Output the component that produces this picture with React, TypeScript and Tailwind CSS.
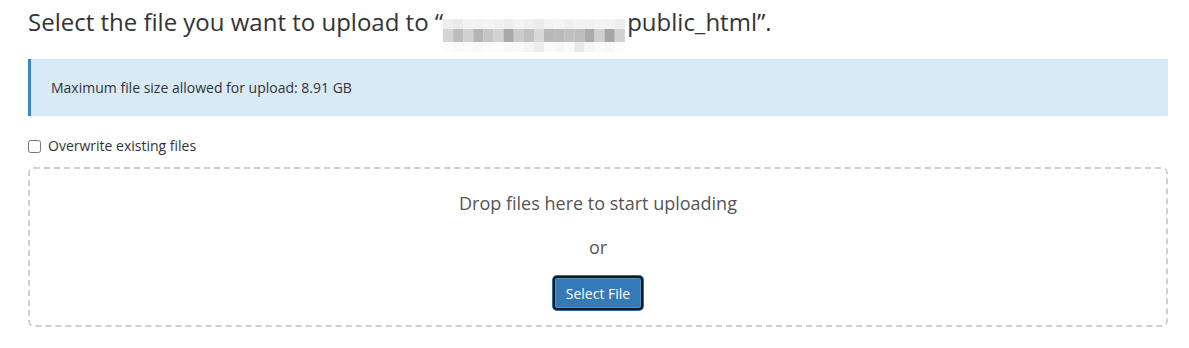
import React from 'react';

// pixelated censor over the folder path, as in the screenshot
const CENSOR_ROWS: string[][] = [
  ['#eeeeee', '#eaeaea', '#f3f3f3', '#f2f2f2', '#f4f4f4', '#f1f1f1', '#eeeeee', '#f3f3f3', '#f0f0f0', '#ebebeb', '#f2f2f2', '#f4f4f4', '#f0f0f0', '#f3f3f3', '#f1f1f1', '#f4f4f4', '#f2f2f2', '#eeeeee'],
  ['#d4d4d4', '#bdbdbd', '#d2d2d2', '#b5b5b5', '#c5c5c5', '#d3d3d3', '#a8a8a8', '#cbcbcb', '#c0c0c0', '#d8d8d8', '#b8b8b8', '#bababa', '#c0c0c0', '#bdbdbd', '#aaaaaa', '#d0d0d0', '#a6a6a6', '#d2d2d2'],
  ['#fcfcfc', '#fafafa', '#fbfbfb', '#f9f9f9', '#fbfbfb', '#fcfcfc', '#f8f8f8', '#fafafa', '#f5f5f5', '#ececec', '#fafafa', '#f7f7f7', '#fbfbfb', '#e8e8e8', '#f6f6f6', '#fafafa', '#f8f8f8', '#fcfcfc'],
];
const ROW_H = [10, 13, 10];

function Censor() {
  let y = 0;
  return (
    <svg width={184} height={33} className="inline-block align-[-11px] -my-[10px]" aria-hidden>
      {CENSOR_ROWS.map((row, r) => {
        const top = y;
        y += ROW_H[r];
        return row.map((c, i) => (
          <rect key={`${r}-${i}`} x={i * 10.1} y={top} width={10.2} height={ROW_H[r]} fill={c} />
        ));
      })}
    </svg>
  );
}

export default function App() {
  return (
    <div className="min-h-[348px] bg-white pl-[28px] pr-[21px] text-[#333] [font-family:'Open_Sans',sans-serif]">
      <h1 className="h-[37px] pt-[7px] text-[24px] leading-[30px] text-[#333] whitespace-nowrap">
        Select the file you want to upload to “<Censor />public_html”.
      </h1>

      <div className="mt-[22px] flex h-[57px] items-center border-l-[3px] border-[#3a87c3] bg-[#d9eaf7] pl-[20px] text-[14px] text-[#333]">
        Maximum file size allowed for upload: 8.91 GB
      </div>

      <label className="mt-[21px] flex items-center gap-[7px] text-[14px] leading-[18px] text-[#333]">
        <input type="checkbox" className="h-[13px] w-[13px] m-0" />
        Overwrite existing files
      </label>

      <div className="mt-[12px] flex h-[160px] flex-col items-center rounded-[6px] border-2 border-dashed border-[#cfcfcf] pt-[22px]">
        <p className="text-[18px] leading-[24px] text-[#555]">Drop files here to start uploading</p>
        <p className="mt-[20px] text-[18px] leading-[24px] text-[#555]">or</p>
        <button
          type="button"
          className="mt-[17px] h-[34px] w-[90px] rounded-[4px] border-2 border-[#0d1b26] bg-[#337ab7] text-[14px] text-white shadow-[0_0_0_1px_#2e6da4,inset_0_0_0_1px_#5d8fbf]"
        >
          Select File
        </button>
      </div>
    </div>
  );
}
